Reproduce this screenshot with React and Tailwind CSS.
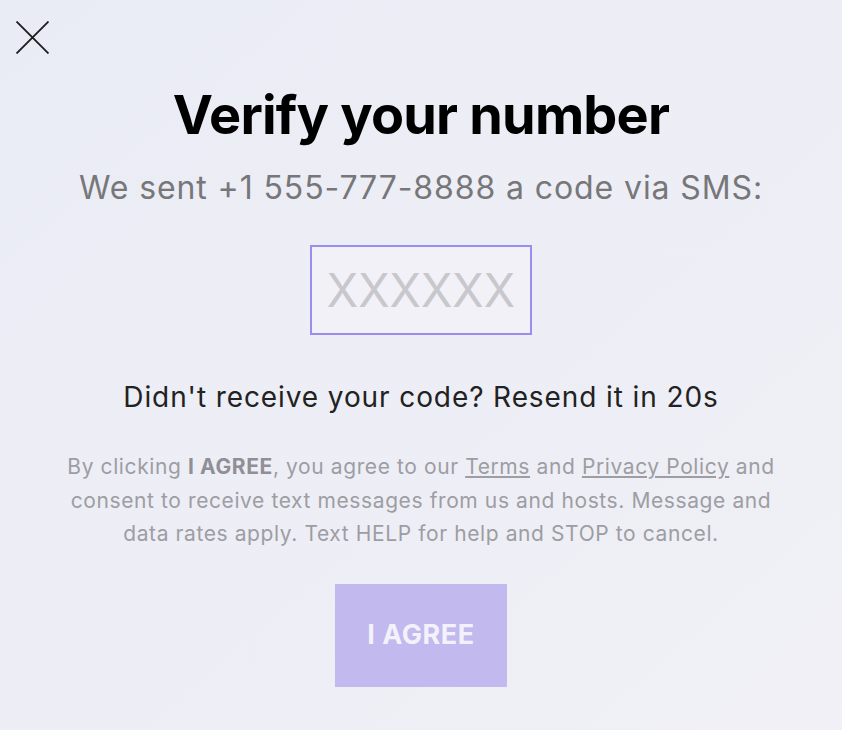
import React, { useState } from "react";

export default function App() {
  const [code, setCode] = useState("");

  return (
    <div className="relative min-h-screen w-full overflow-hidden bg-gradient-to-br from-[#eaecf5] to-[#f0f0f6] font-['Inter',sans-serif]">
      <button className="absolute left-[16px] top-[21px] text-[#1c1c1c]" title="Close">
        <svg width="33" height="33" viewBox="0 0 33 33" fill="none" stroke="currentColor" strokeWidth="1.8">
          <path d="M0.5 0.5 L32.5 32.5 M32.5 0.5 L0.5 32.5" />
        </svg>
      </button>

      <div className="flex flex-col items-center pt-[83px] text-center">
        <h1 className="text-[54px] font-bold leading-[64px] tracking-[-0.8px] text-black">
          Verify your number
        </h1>
        <p className="mt-[21px] text-[32px] leading-[40px] tracking-[0.9px] text-[#77777a]">
          We sent +1 555-777-8888 a code via SMS:
        </p>

        <input
          value={code}
          onChange={(e) => setCode(e.target.value)}
          placeholder="XXXXXX"
          className="mt-[37px] h-[90px] w-[222px] border-2 border-[#9b8cf0] bg-[#f1f1f7] text-center text-[46px] text-[#333] outline-none placeholder:text-[#c8c8cc]"
        />

        <p className="mt-[44px] text-[28px] leading-[36px] tracking-[0.9px] text-[#222]">
          Didn't receive your code? Resend it in 20s
        </p>

        <p className="mt-[35px] w-[720px] text-[21px] leading-[33.5px] tracking-[0.6px] text-[#9d9da3]">
          By clicking <span className="font-bold text-[#8f8f95]">I AGREE</span>, you agree to our{" "}
          <a className="underline">Terms</a> and <a className="underline">Privacy Policy</a> and consent to
          receive text messages from us and hosts. Message and data rates apply. Text HELP for help and STOP
          to cancel.
        </p>

        <button className="mt-[33px] h-[103px] w-[172px] bg-[#c2b9ef] text-[27px] font-bold tracking-[0.5px] text-[#f3f2fb]">
          I AGREE
        </button>
      </div>
    </div>
  );
}
